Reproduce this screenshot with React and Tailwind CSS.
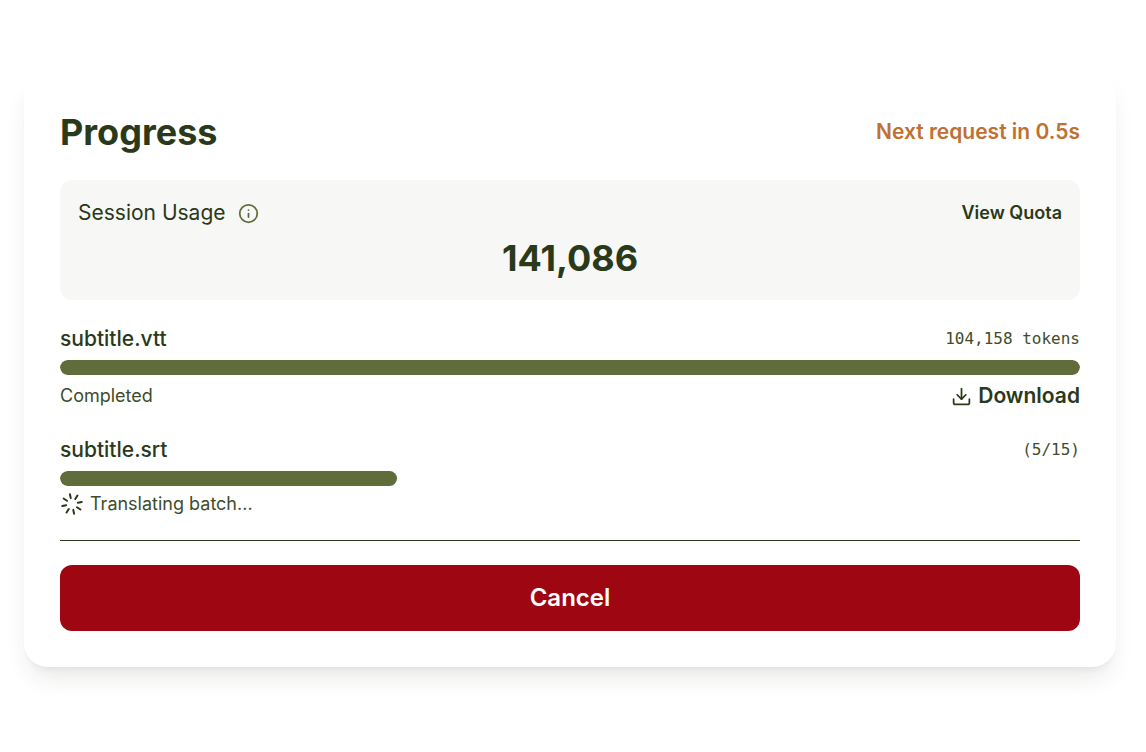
import React from 'react';
import { Download, Info, Loader } from 'lucide-react';

const files = [
  { name: 'subtitle.vtt', detail: '104,158 tokens', percent: 100, status: 'Completed', done: true },
  { name: 'subtitle.srt', detail: '(5/15)', percent: 33, status: 'Translating batch...', done: false },
];

const FileProgress = ({ file }) => {
  return (
    <li>
      <div className="flex items-center justify-between mb-1.5">
        <span className="text-[21px] leading-[30px] font-medium">{file.name}</span>
        <span className="font-['DejaVu_Sans_Mono',monospace] text-[16px] leading-[30px] text-[#3e4c2c]">{file.detail}</span>
      </div>

      <div
        role="progressbar"
        aria-label={file.name}
        aria-valuenow={file.percent}
        aria-valuemin={0}
        aria-valuemax={100}
        className="w-full h-[15px] rounded-full overflow-hidden"
      >
        <div className="h-full rounded-full bg-[#606c3a]" style={{ width: `${file.percent}%` }} />
      </div>

      <div className="flex items-center justify-between mt-1.5">
        <span className="flex items-center gap-1.5 text-[18px] leading-6 text-[#3e4c2c]">
          {!file.done && <Loader className="w-6 h-6 -rotate-12 text-[#2a391a]" />}
          {file.status}
        </span>
        {file.done && (
          <button type="button" className="flex items-center gap-1.5 text-[21px] leading-[30px] font-semibold cursor-pointer">
            {/* Tray with a down arrow */}
            <Download className="w-[21px] h-[21px]" />
            Download
          </button>
        )}
      </div>
    </li>
  );
};

const App = () => {
  return (
    <main className="min-h-screen w-full bg-white pl-6 pr-[30px] pt-[72px] pb-12 font-['Inter',sans-serif] text-[#2a391a]">
      <section className="rounded-3xl bg-white p-9 shadow-[0_15px_23px_-5px_rgba(40,40,30,0.1),0_6px_9px_-6px_rgba(40,40,30,0.1)]">
        {/* Header */}
        <div className="flex items-center justify-between mb-6">
          <h1 className="text-[36px] leading-[48px] font-bold">Progress</h1>
          <p className="text-[21px] leading-[30px] font-semibold text-[#c07030]">Next request in 0.5s</p>
        </div>

        {/* Session usage */}
        <div className="mb-6 rounded-xl bg-[#f7f7f5] p-[18px]">
          <div className="flex items-center justify-between mb-1.5">
            <div className="flex items-center gap-3">
              <span className="text-[21px] leading-[30px]">Session Usage</span>
              <button type="button" aria-label="About session usage" className="cursor-pointer text-[#606c3a]">
                <Info className="w-[21px] h-[21px]" />
              </button>
            </div>
            <button type="button" className="text-[18px] leading-6 font-semibold cursor-pointer">View Quota</button>
          </div>
          <p className="text-center text-[36px] leading-[48px] font-bold">141,086</p>
        </div>

        {/* Files */}
        <ul className="flex flex-col gap-6">
          {files.map((file) => (
            <FileProgress key={file.name} file={file} />
          ))}
        </ul>

        <div className="mt-6 border-t border-[#2a391a] pt-6">
          <button type="button" className="w-full rounded-xl bg-[#9e0711] py-[15px] text-[24px] leading-9 font-semibold text-white cursor-pointer">
            Cancel
          </button>
        </div>
      </section>
    </main>
  );
};

export default App;
